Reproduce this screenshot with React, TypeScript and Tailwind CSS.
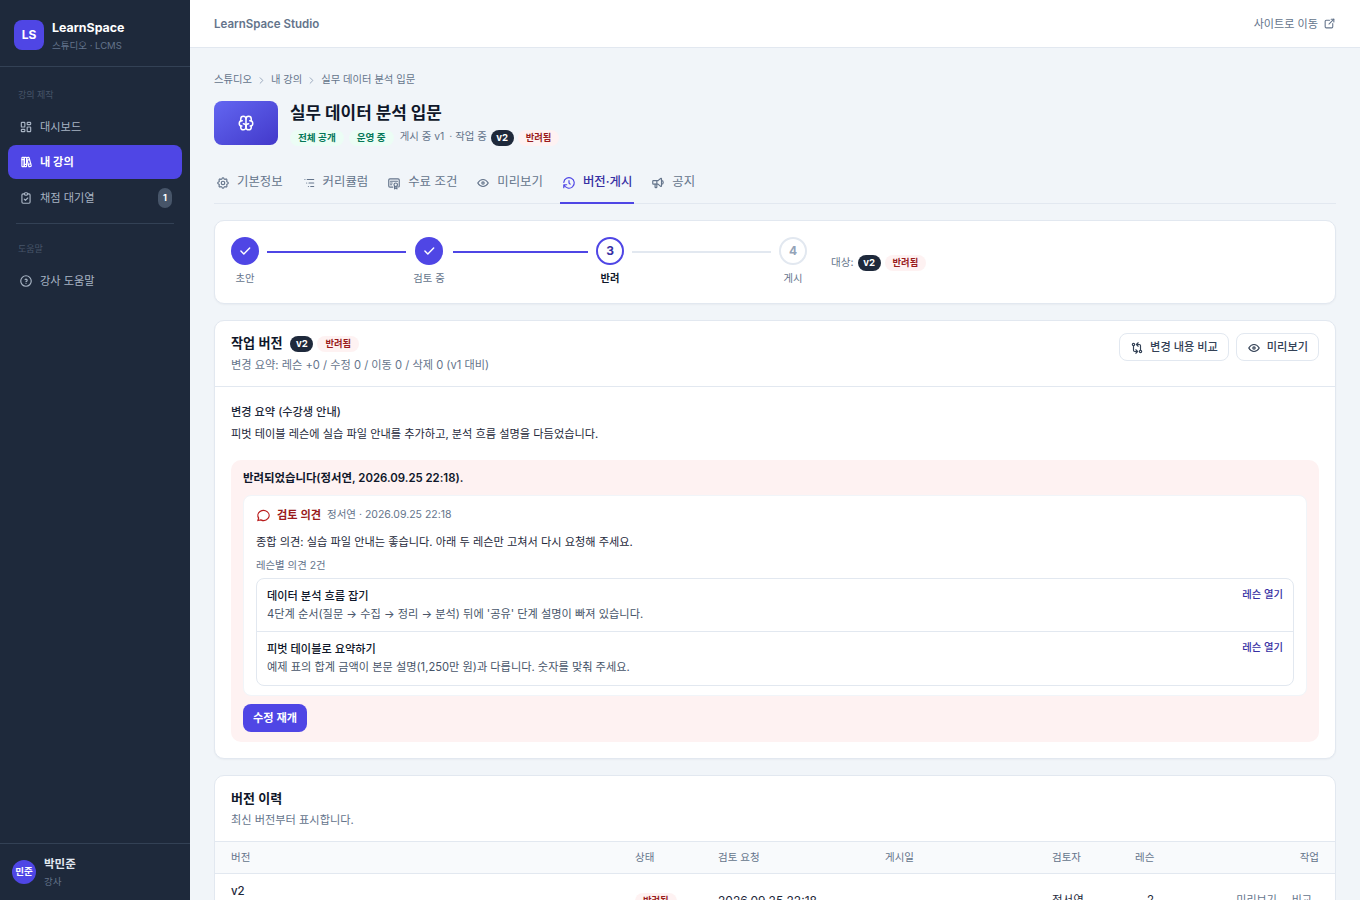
import {
  TbLayoutDashboard,
  TbBooks,
  TbClipboardCheck,
  TbHelpCircle,
  TbSettings,
  TbListTree,
  TbCertificate,
  TbEye,
  TbHistory,
  TbSpeakerphone,
  TbBrain,
  TbMessageCircle,
  TbGitCompare,
  TbExternalLink,
  TbCheck,
  TbChevronRight,
} from 'react-icons/tb';

const VersionBadge = () => (
  <span className="inline-flex h-[16px] w-[23px] items-center justify-center rounded-full bg-[#1e293b] text-[9.6px] font-bold text-white">v2</span>
);

const RejectedBadge = ({ className = '' }: { className?: string }) => (
  <span className={`inline-flex h-[16px] items-center rounded-full bg-[#fef2f2] px-[8px] text-[9.3px] font-semibold text-[#991b1b] ${className}`}>반려됨</span>
);

const GreenBadge = ({ label, className = '' }: { label: string; className?: string }) => (
  <span className={`inline-flex h-[16px] items-center rounded-full bg-[#ecfdf5] px-[8px] text-[9.6px] font-semibold text-[#047857] ${className}`}>{label}</span>
);

const tabs = [
  { label: '기본정보', icon: TbSettings },
  { label: '커리큘럼', icon: TbListTree },
  { label: '수료 조건', icon: TbCertificate },
  { label: '미리보기', icon: TbEye },
  { label: '버전·게시', icon: TbHistory, active: true },
  { label: '공지', icon: TbSpeakerphone },
];

const steps = [
  { label: '초안', state: 'done', line: 'ml-[8px] mr-[9px] w-[139px]' },
  { label: '검토 중', state: 'done', line: 'ml-[10px] mr-[8px] w-[135px]' },
  { label: '반려', state: 'current', num: '3', line: 'mx-[8px] w-[139px]' },
  { label: '게시', state: 'todo', num: '4' },
];

const lessonNotes = [
  { title: '데이터 분석 흐름 잡기', body: "4단계 순서(질문 → 수집 → 정리 → 분석) 뒤에 '공유' 단계 설명이 빠져 있습니다." },
  { title: '피벗 테이블로 요약하기', body: '예제 표의 합계 금액이 본문 설명(1,250만 원)과 다릅니다. 숫자를 맞춰 주세요.' },
];

const Sidebar = () => (
  <aside className="flex h-screen w-[190px] shrink-0 flex-col bg-[#1e293b]">
    <div className="flex h-[67px] items-center gap-[8px] border-b border-[#334155] px-[14px] pt-[3px]">
      <div className="flex h-[30px] w-[30px] items-center justify-center rounded-[8px] bg-[#4f46e5] text-[12px] font-bold text-white">LS</div>
      <div className="pt-[2px]">
        <div className="text-[12.4px] leading-[18px] font-bold text-white">LearnSpace</div>
        <div className="mt-[1px] text-[9.5px] leading-[15px] text-[#64748b]">스튜디오 · LCMS</div>
      </div>
    </div>
    <nav className="flex-1 px-[8px] pt-[22px]">
      <div className="mb-[9px] px-[10px] text-[9px] leading-[12px] text-[#475569]">강의 제작</div>
      <div className="flex h-[34px] items-center gap-[7px] px-[11px] text-[11.2px] text-[#a8b4c4]">
        <TbLayoutDashboard className="h-[14px] w-[14px]" />
        대시보드
      </div>
      <div className="mt-[1px] flex h-[34px] items-center gap-[7px] rounded-[8px] bg-[#4f46e5] px-[11px] text-[11.2px] font-semibold text-white">
        <TbBooks className="h-[14px] w-[14px]" />
        내 강의
      </div>
      <div className="mt-[1px] flex h-[36px] items-center gap-[7px] pr-[10px] pl-[11px] text-[11.2px] text-[#a8b4c4]">
        <TbClipboardCheck className="h-[14px] w-[14px]" />
        채점 대기열
        <span className="ml-auto flex h-[20px] w-[14px] items-center justify-center rounded-full bg-[#475569] text-[9px] font-bold text-white">1</span>
      </div>
      <div className="mx-[8px] mt-[7px] border-t border-[#334155]" />
      <div className="mt-[19px] mb-[9px] px-[10px] text-[9px] leading-[12px] text-[#475569]">도움말</div>
      <div className="flex h-[34px] items-center gap-[7px] px-[11px] text-[11.2px] text-[#a8b4c4]">
        <TbHelpCircle className="h-[14px] w-[14px]" />
        강사 도움말
      </div>
    </nav>
    <div className="flex h-[57px] items-center gap-[8px] border-t border-[#334155] px-[12px]">
      <div className="flex h-[24px] w-[24px] items-center justify-center rounded-full bg-[#4f46e5] text-[9.5px] font-bold text-white">민준</div>
      <div>
        <div className="text-[11.5px] leading-[17px] font-semibold text-[#e2e8f0]">박민준</div>
        <div className="mt-[1px] text-[9.5px] leading-[15px] text-[#64748b]">강사</div>
      </div>
    </div>
  </aside>
);

const Stepper = () => (
  <div className="mt-[16px] flex h-[84px] items-start rounded-[10px] border border-[#e2e8f0] bg-white px-[16px] pt-[16px] shadow-[0_1px_2px_rgba(15,23,42,0.04)]">
    {steps.map((step) => (
      <div key={step.label} className="flex items-start">
        <div className="flex w-[28px] flex-col items-center">
          {step.state === 'done' && (
            <div className="flex h-[28px] w-[28px] items-center justify-center rounded-full bg-[#4f46e5] text-white">
              <TbCheck className="h-[14px] w-[14px]" strokeWidth={2.5} />
            </div>
          )}
          {step.state === 'current' && (
            <div className="flex h-[28px] w-[28px] items-center justify-center rounded-full border-2 border-[#4f46e5] bg-white text-[12px] font-bold text-[#3730a3]">{step.num}</div>
          )}
          {step.state === 'todo' && (
            <div className="flex h-[28px] w-[28px] items-center justify-center rounded-full border-2 border-[#e2e8f0] bg-white text-[12px] font-bold text-[#94a3b8]">{step.num}</div>
          )}
          <div className={`mt-[5px] whitespace-nowrap text-[10.3px] leading-[16px] ${step.state === 'current' ? 'font-semibold text-[#0f172a]' : 'text-[#64748b]'}`}>{step.label}</div>
        </div>
        {step.line && (
          <div className={`mt-[14px] h-[2px] ${step.line} ${step.state === 'done' ? 'bg-[#4f46e5]' : 'bg-[#e2e8f0]'}`} />
        )}
      </div>
    ))}
    <div className="mt-[18px] ml-[24px] flex items-center gap-[4px] text-[10.6px] text-[#64748b]">
      대상:
      <VersionBadge />
      <RejectedBadge />
    </div>
  </div>
);

const WorkingVersion = () => (
  <section className="mt-[16px] rounded-[10px] border border-[#e2e8f0] bg-white shadow-[0_1px_2px_rgba(15,23,42,0.04)]">
    <div className="flex items-start justify-between border-b border-[#e2e8f0] px-[16px] pt-[12px] pb-[12px]">
      <div>
        <div className="mt-[1px] flex h-[20px] items-center gap-[8px]">
          <span className="text-[13.1px] font-semibold text-[#0f172a]">작업 버전</span>
          <VersionBadge />
          <RejectedBadge className="-ml-[4px]" />
        </div>
        <p className="mt-[2px] text-[11.2px] leading-[18px] text-[#64748b]">변경 요약: 레슨 +0 / 수정 0 / 이동 0 / 삭제 0 (v1 대비)</p>
      </div>
      <div className="flex gap-[7px]">
        <button className="flex h-[28px] items-center gap-[6px] rounded-[8px] border border-[#e2e8f0] bg-white pt-[1px] pr-[10px] pl-[10px] text-[11.2px] font-medium text-[#334155]">
          <TbGitCompare className="h-[14px] w-[14px]" />
          변경 내용 비교
        </button>
        <button className="flex h-[28px] items-center gap-[6px] rounded-[8px] border border-[#e2e8f0] bg-white pt-[1px] pr-[10px] pl-[10px] text-[11.2px] font-medium text-[#334155]">
          <TbEye className="h-[14px] w-[14px]" />
          미리보기
        </button>
      </div>
    </div>
    <div className="px-[16px] pt-[15px] pb-[16px]">
      <div className="text-[11.2px] leading-[20px] font-medium text-[#1e293b]">변경 요약 (수강생 안내)</div>
      <p className="mt-[2px] text-[11.2px] leading-[20px] text-[#1e293b]">피벗 테이블 레슨에 실습 파일 안내를 추가하고, 분석 흐름 설명을 다듬었습니다.</p>
      <div className="mt-[16px] rounded-[10px] bg-[#fef2f2] px-[12px] pt-[9px] pb-[10px]">
        <div className="text-[11.4px] leading-[18px] font-semibold text-[#0f172a]">반려되었습니다(정서연, 2026.09.25 22:18).</div>
        <div className="mt-[8px] rounded-[8px] border border-[#f1f5f9] bg-white px-[12px] pt-[10px] pb-[9px]">
          <div className="flex h-[18px] items-center">
            <TbMessageCircle className="h-[15px] w-[15px] text-[#b91c1c]" />
            <span className="ml-[6px] text-[11.2px] font-semibold text-[#991b1b]">검토 의견</span>
            <span className="ml-[6px] text-[10.5px] text-[#64748b]">정서연 · 2026.09.25 22:18</span>
          </div>
          <p className="mt-[8px] text-[11.2px] leading-[20px] text-[#1e293b]">종합 의견: 실습 파일 안내는 좋습니다. 아래 두 레슨만 고쳐서 다시 요청해 주세요.</p>
          <div className="mt-[6px] text-[10.4px] leading-[16px] text-[#64748b]">레슨별 의견 2건</div>
          <div className="mt-[4px] divide-y divide-[#e2e8f0] rounded-[8px] border border-[#e2e8f0]">
            {lessonNotes.map((note) => (
              <div key={note.title} className="flex h-[53px] items-start justify-between px-[10px] pt-[8px]">
                <div>
                  <div className="text-[11.2px] leading-[18px] font-medium text-[#0f172a]">{note.title}</div>
                  <div className="text-[11.2px] leading-[18px] text-[#475569]">{note.body}</div>
                </div>
                <a className="-mt-[1px] text-[10.3px] leading-[16px] font-medium text-[#3730a3]">레슨 열기</a>
              </div>
            ))}
          </div>
        </div>
        <button className="mt-[8px] flex h-[28px] w-[64px] items-center justify-center rounded-[8px] bg-[#4f46e5] text-[11.2px] font-semibold text-white">수정 재개</button>
      </div>
    </div>
  </section>
);

const columns = 'grid grid-cols-[404px_83px_167px_167px_83px_1fr] px-[16px]';

const VersionHistory = () => (
  <section className="mt-[16px] rounded-[10px] border border-[#e2e8f0] bg-white">
    <div className="px-[16px] pt-[12px] pb-[12px]">
      <h2 className="text-[13px] leading-[20px] font-semibold text-[#0f172a]">버전 이력</h2>
      <p className="mt-[3px] text-[11.2px] leading-[18px] text-[#64748b]">최신 버전부터 표시합니다.</p>
    </div>
    <div className={`${columns} h-[33px] items-center border-y border-[#e2e8f0] bg-[#f8fafc] text-[10.5px] text-[#64748b]`}>
      <span>버전</span>
      <span>상태</span>
      <span>검토 요청</span>
      <span>게시일</span>
      <span>검토자</span>
      <div className="flex justify-between">
        <span>레슨</span>
        <span>작업</span>
      </div>
    </div>
    <div className={`${columns} h-[54px] items-center text-[11.5px] text-[#1e293b]`}>
      <div className="self-start pt-[9px] leading-[16px] font-medium">v2</div>
      <div><RejectedBadge /></div>
      <span className="text-[12px]">2026.09.25 22:18</span>
      <span />
      <span>정서연</span>
      <div className="flex justify-between">
        <span className="pl-[12px]">2</span>
        <div className="flex gap-[15px] pr-[7px] text-[11px] text-[#64748b]">
          <span>미리보기</span>
          <span>비교</span>
        </div>
      </div>
    </div>
  </section>
);

export default function App() {
  return (
    <div className="flex h-screen overflow-hidden bg-[#f1f5f9] font-['Inter','Noto_Sans_CJK_KR',sans-serif]">
      <Sidebar />
      <div className="flex min-w-0 flex-1 flex-col">
        <header className="flex h-[48px] shrink-0 items-center justify-between border-b border-[#e2e8f0] bg-white px-[24px]">
          <span className="pt-[2px] text-[11.5px] font-semibold text-[#64748b]">LearnSpace Studio</span>
          <a className="flex items-center gap-[5px] pt-[1px] text-[11.1px] text-[#64748b]">
            사이트로 이동
            <TbExternalLink className="h-[13px] w-[13px]" />
          </a>
        </header>
        <main className="flex-1 overflow-hidden px-[24px] pt-[24px]">
          <div className="flex h-[16px] items-center text-[10.3px] text-[#64748b]">
            <span>스튜디오</span>
            <TbChevronRight className="mx-[4px] h-[11px] w-[11px] text-[#94a3b8]" />
            <span>내 강의</span>
            <TbChevronRight className="mx-[4px] h-[11px] w-[11px] text-[#94a3b8]" />
            <span>실무 데이터 분석 입문</span>
          </div>
          <div className="mt-[13px] flex items-start gap-[12px]">
            <div className="flex h-[44px] w-[64px] items-center justify-center rounded-[8px] bg-gradient-to-br from-[#6366f1] to-[#4338ca] text-white">
              <TbBrain className="h-[18px] w-[18px]" />
            </div>
            <div>
              <h1 className="text-[16.9px] leading-[24px] font-bold text-[#0f172a]">실무 데이터 분석 입문</h1>
              <div className="mt-[4px] flex h-[18px] items-center gap-[4px] text-[10.4px] text-[#64748b]">
                <GreenBadge label="전체 공개" />
                <GreenBadge label="운영 중" className="ml-[1px]" />
                <span className="ml-[2px] -translate-y-px">게시 중 v1</span>
                <span className="ml-[1px] -translate-y-px">· 작업 중</span>
                <VersionBadge />
                <RejectedBadge />
              </div>
            </div>
          </div>
          <div className="mt-[12px] flex h-[45px] gap-[15px] border-b border-[#e2e8f0]">
            {tabs.map((tab) => (
              <div
                key={tab.label}
                className={`-mb-px flex h-[45px] items-center gap-[7px] border-b-2 px-[2px] pt-[4px] text-[12.4px] ${tab.active ? 'border-[#4f46e5] font-medium text-[#3730a3]' : 'border-transparent text-[#64748b]'}`}
              >
                <tab.icon className={`h-[14px] w-[14px] ${tab.active ? 'text-[#4f46e5]' : ''}`} />
                {tab.label}
              </div>
            ))}
          </div>
          <Stepper />
          <WorkingVersion />
          <VersionHistory />
        </main>
      </div>
    </div>
  );
}
